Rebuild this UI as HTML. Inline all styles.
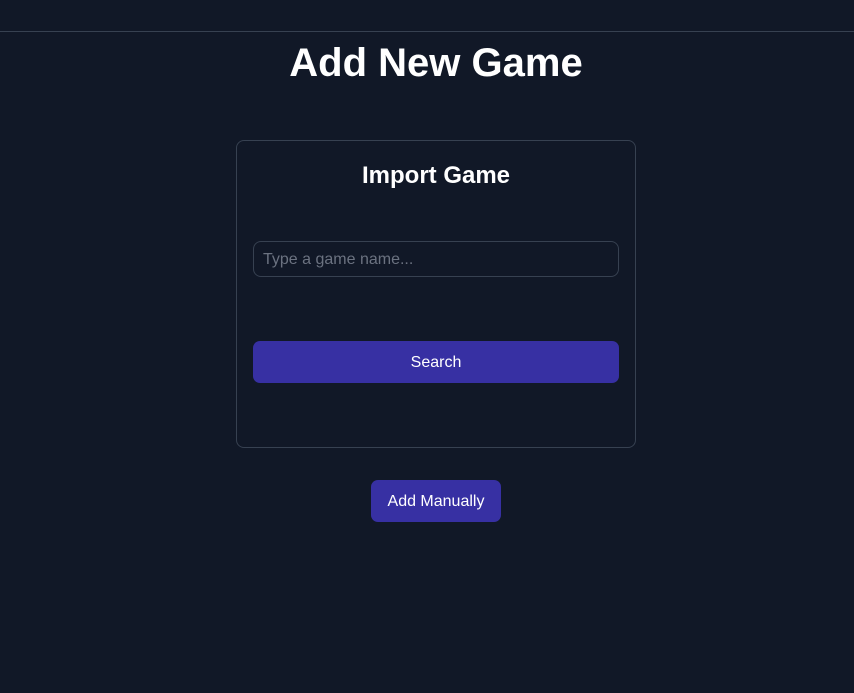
<!DOCTYPE html>
<html><head><style>
html,body{margin:0;padding:0;background:#111827;width:854px;height:693px;overflow:hidden;font-family:"Liberation Sans",Arial,sans-serif;color:#fff}
.line{position:absolute;top:31px;left:0;width:854px;height:1px;background:#374151}
h1{position:absolute;top:41px;left:0;width:872px;text-align:center;margin:0;font-size:40px;font-weight:bold;line-height:44px}
.card{position:absolute;left:236px;top:140px;width:398px;height:306px;border:1px solid #374151;border-radius:8px;box-sizing:content-box}
h2{position:absolute;top:163px;left:236px;width:400px;text-align:center;margin:0;font-size:24px;line-height:26px}
.inp{position:absolute;left:253px;top:241px;border:1px solid #374151;border-radius:8px;color:#6b7280;font-size:16px;line-height:36px;padding-left:9px;box-sizing:border-box;width:366px;height:36px}
.btn{position:absolute;background:#3730a3;border-radius:7px;color:#fff;font-size:16px;text-align:center}
</style></head><body>
<div class="line"></div>
<h1>Add New Game</h1>
<div class="card"></div>
<h2>Import Game</h2>
<div class="inp">Type a game name...</div>
<div class="btn" style="left:253px;top:341px;width:366px;height:42px;line-height:43px">Search</div>
<div class="btn" style="left:371px;top:480px;width:130px;height:42px;line-height:43px">Add Manually</div>
</body></html>
